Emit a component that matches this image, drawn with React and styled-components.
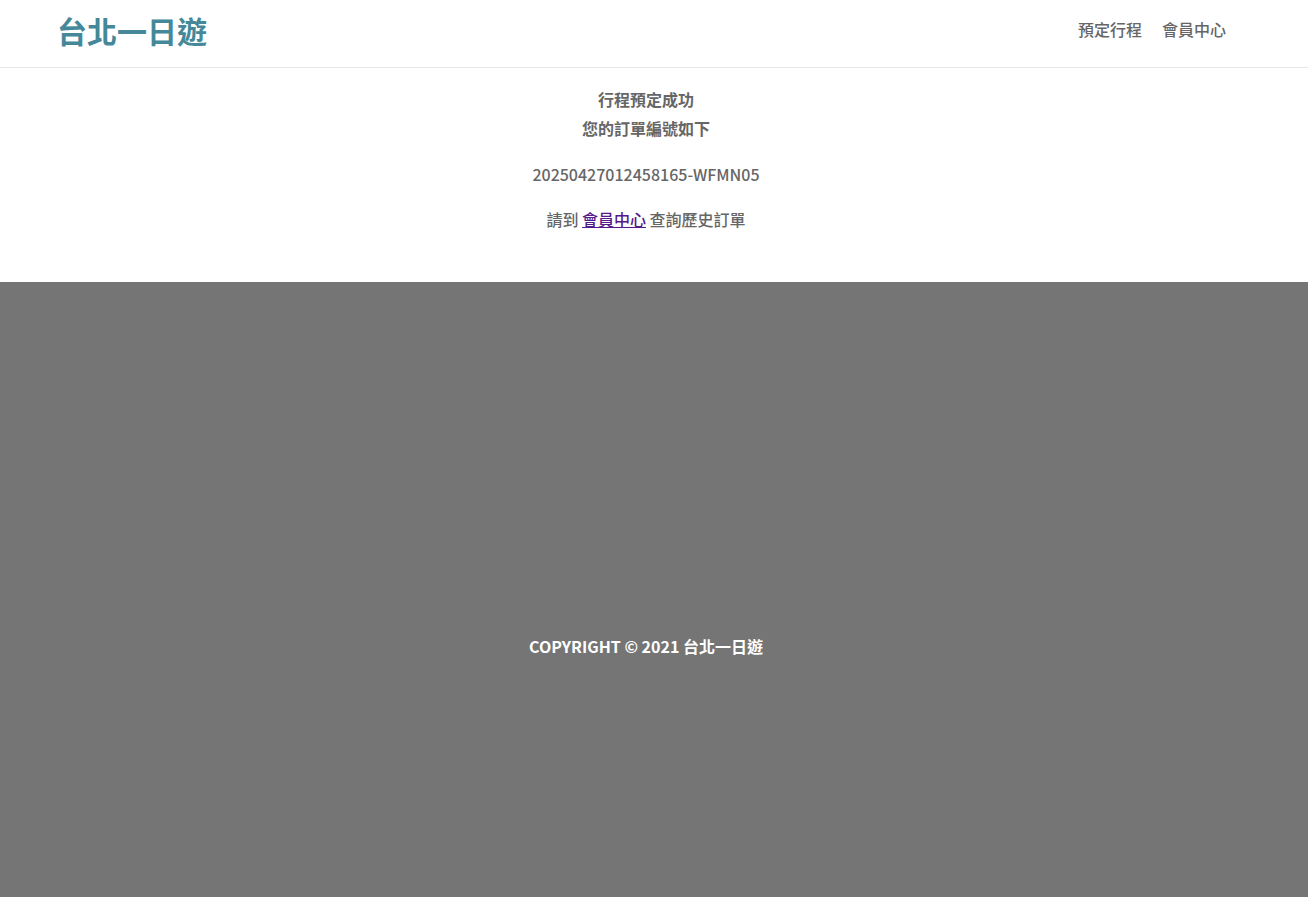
import React from 'react';
import styled, { createGlobalStyle } from 'styled-components';

const GlobalStyle = createGlobalStyle`
  html, body {
    margin: 0;
    padding: 0;
    height: 100%;
  }
  body {
    font-family: "Noto Sans CJK TC", "Noto Sans", sans-serif;
    color: #666666;
  }
  #root {
    min-height: 100%;
    display: flex;
    flex-direction: column;
  }
`;

const Page = styled.div`
  flex: 1;
  display: flex;
  flex-direction: column;
  min-height: 100vh;
`;

const Header = styled.header`
  height: 67px;
  border-bottom: 1px solid #e8e8e8;
`;

const HeaderInner = styled.div`
  max-width: 1200px;
  height: 100%;
  margin: 0 auto;
  padding: 0 18px 8px 3px;
  box-sizing: border-box;
  display: flex;
  align-items: center;
  justify-content: space-between;
`;

const Logo = styled.a`
  font-size: 30px;
  font-weight: 700;
  color: #448899;
  text-decoration: none;
  line-height: 34px;
`;

const Nav = styled.nav`
  display: flex;
  align-items: center;
  margin-bottom: 2px;
`;

const NavItem = styled.a`
  padding: 10px;
  font-size: 16px;
  font-weight: 500;
  color: #666666;
  text-decoration: none;
  line-height: 20px;
`;

/* the reference page scrolls, so its centre sits 8px left of the window's */
const Main = styled.main`
  padding: 17px 16px 51px 0;
  text-align: center;
`;

const Headline = styled.div`
  font-size: 16px;
  font-weight: 700;
  line-height: 29px;
`;

const OrderNumber = styled.div`
  margin-top: 19px;
  font-size: 16px;
  font-weight: 500;
  line-height: 24px;
`;

const Hint = styled.div`
  margin-top: 21px;
  font-size: 16px;
  font-weight: 500;
  line-height: 24px;
`;

const MemberLink = styled.a`
  color: #551a8b;
  text-decoration: underline;
`;

const Footer = styled.footer`
  flex: 1;
  background: #757575;
  color: #ffffff;
  font-size: 16px;
  font-weight: 700;
  text-align: center;
  padding: 352px 16px 0 0;
  line-height: 24px;
`;

const App = () => {
  return (
    <Page>
      <GlobalStyle />
      <Header>
        <HeaderInner>
          <Logo href="#">台北一日遊</Logo>
          <Nav>
            <NavItem href="#">預定行程</NavItem>
            <NavItem href="#">會員中心</NavItem>
          </Nav>
        </HeaderInner>
      </Header>
      <Main>
        <Headline>行程預定成功</Headline>
        <Headline>您的訂單編號如下</Headline>
        <OrderNumber>20250427012458165-WFMN05</OrderNumber>
        <Hint>
          請到 <MemberLink href="#">會員中心</MemberLink> 查詢歷史訂單
        </Hint>
      </Main>
      <Footer>COPYRIGHT © 2021 台北一日遊</Footer>
    </Page>
  );
};

export default App;
